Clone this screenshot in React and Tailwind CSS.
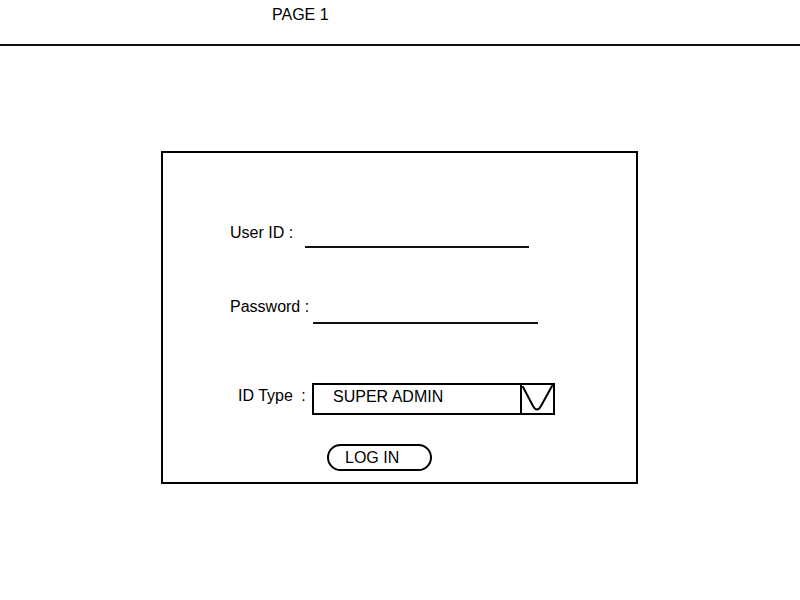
// Login mockup — wireframe style page with a header rule and a bordered form

function Underline({ width }) {
  return <div className={`h-[2px] bg-[#111] ${width}`} />
}

function ChevronBox() {
  return (
    <div className="h-full w-[33px] border-l-2 border-black flex items-center justify-center">
      <svg width="31" height="28" viewBox="0 0 31 28" fill="none">
        <path
          d="M1 2 L11 21 Q15 28 19 21 L30 1"
          stroke="#000"
          strokeWidth="2"
          strokeLinecap="round"
          strokeLinejoin="round"
        />
      </svg>
    </div>
  )
}

export default function App() {
  return (
    <div className="w-[800px] h-[600px] bg-white text-black font-['Liberation_Sans',Arial,sans-serif] text-[16px] leading-[18px] overflow-hidden">
      {/* Header */}
      <div className="h-[44px] pl-[272px] pt-[6px]">PAGE 1</div>
      <div className="h-[2px] w-full bg-[#111]" />

      {/* Login box */}
      <div className="ml-[161px] mt-[105px] w-[477px] h-[333px] border-2 border-black">
        {/* User ID */}
        <div className="flex items-start mt-[71px] pl-[67px]">
          <span className="w-[75px]">User ID :</span>
          <div className="mt-[22px]">
            <Underline width="w-[224px]" />
          </div>
        </div>

        {/* Password */}
        <div className="flex items-start mt-[50px] pl-[67px]">
          <span className="w-[83px]">Password :</span>
          <div className="mt-[24px]">
            <Underline width="w-[225px]" />
          </div>
        </div>

        {/* ID Type */}
        <div className="flex items-start mt-[59px] pl-[75px]">
          <span className="w-[74px] mt-[4px]">
            ID Type <span className="ml-[4px]">:</span>
          </span>
          <div className="w-[243px] h-[32px] border-2 border-black flex">
            <span className="flex-1 pl-[19px] pt-[3px]">SUPER ADMIN</span>
            <ChevronBox />
          </div>
        </div>

        {/* Log in */}
        <div className="mt-[29px] pl-[164px]">
          <button className="w-[105px] h-[27px] border-2 border-black rounded-full text-left pl-[16px] pt-[1px] leading-[18px]">
            LOG IN
          </button>
        </div>
      </div>
    </div>
  )
}
